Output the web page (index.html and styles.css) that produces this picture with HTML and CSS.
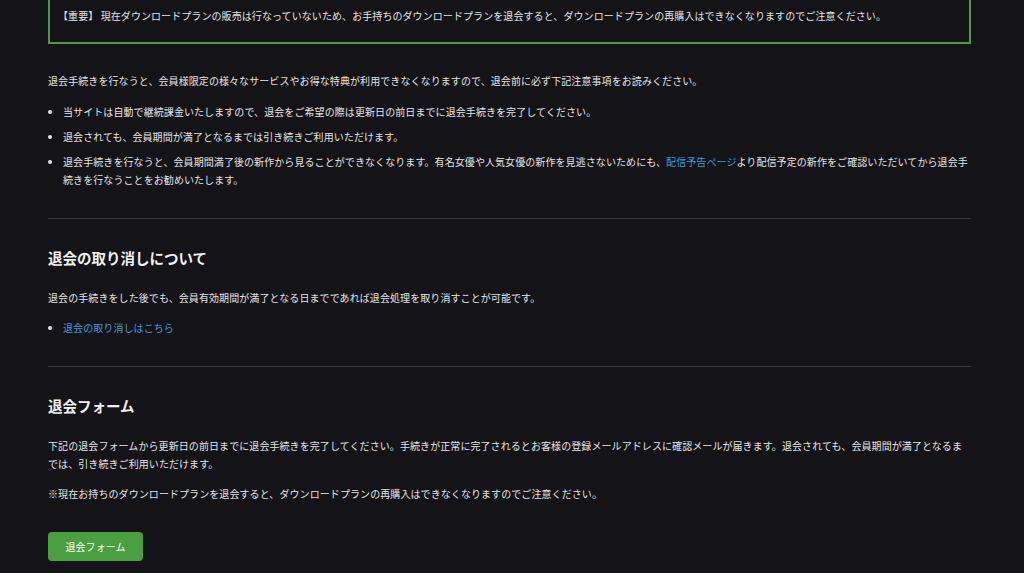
FILE: index.html
```html
<!DOCTYPE html>
<html lang="ja">
<head>
  <meta charset="UTF-8">
  <title>退会手続き</title>
  <link rel="stylesheet" href="styles.css">
</head>
<body>

<div class="container">
  <div class="notice">
    【重要】 現在ダウンロードプランの販売は行なっていないため、お手持ちのダウンロードプランを退会すると、ダウンロードプランの再購入はできなくなりますのでご注意ください。
  </div>

  <div class="section first">
    <p class="lead">退会手続きを行なうと、会員様限定の様々なサービスやお得な特典が利用できなくなりますので、退会前に必ず下記注意事項をお読みください。</p>
    <ul class="list">
      <li>当サイトは自動で継続課金いたしますので、退会をご希望の際は更新日の前日までに退会手続きを完了してください。</li>
      <li>退会されても、会員期間が満了となるまでは引き続きご利用いただけます。</li>
      <li>退会手続きを行なうと、会員期間満了後の新作から見ることができなくなります。有名女優や人気女優の新作を見逃さないためにも、<a href="#">配信予告ページ</a>より配信予定の新作をご確認いただいてから退会手続きを行なうことをお勧めいたします。</li>
    </ul>
  </div>

  <hr>

  <div class="section">
    <h2>退会の取り消しについて</h2>
    <p>退会の手続きをした後でも、会員有効期間が満了となる日までであれば退会処理を取り消すことが可能です。</p>
    <ul class="list">
      <li><a href="#">退会の取り消しはこちら</a></li>
    </ul>
  </div>

  <hr>

  <div class="section">
    <h2>退会フォーム</h2>
    <p>下記の退会フォームから更新日の前日までに退会手続きを完了してください。手続きが正常に完了されるとお客様の登録メールアドレスに確認メールが届きます。退会されても、会員期間が満了となるまでは、引き続きご利用いただけます。</p>
    <p class="note">※現在お持ちのダウンロードプランを退会すると、ダウンロードプランの再購入はできなくなりますのでご注意ください。</p>
    <button class="submit">退会フォーム</button>
  </div>
</div>

</body>
</html>
```

FILE: styles.css
```css
body {
  margin: 0;
  padding: 0;
  background: #141318;
  color: #e4e4e6;
  font-family: "Noto Sans CJK JP", "Noto Sans", sans-serif;
  font-size: 10px;
  line-height: 18px;
  letter-spacing: 0.08px;
}
.container {
  width: 923px;
  margin-left: 48px;
}
.notice {
  margin-top: -13px;
  padding: 18px 8px 17px 8px;
  border: 2px solid #4c9c45;
}
.section.first {
  margin-top: 28px;
}
p {
  margin: 0;
}
.lead {
  margin-bottom: 13px;
}
.list {
  margin: 12px 0 0;
  padding: 0 0 0 15px;
}
.list li {
  margin-bottom: 7px;
}
.list li:last-child {
  margin-bottom: 0;
}
.section > .lead + .list {
  margin-top: 0;
}
a {
  color: #3f9ad8;
  text-decoration: none;
}
hr {
  border: none;
  border-top: 1px solid #38373c;
  margin: 29px 0 29px;
}
h2 {
  font-size: 14.5px;
  font-weight: bold;
  line-height: 20px;
  margin: 0 0 21px;
  color: #f0f0f2;
  letter-spacing: 0;
}
.note {
  margin-top: 12px;
}
.submit {
  margin-top: 29px;
  width: 95px;
  height: 29px;
  background: #4a9f41;
  color: #ffffff;
  border: none;
  border-radius: 4px;
  font-family: "Noto Sans CJK JP", sans-serif;
  font-size: 10px;
  letter-spacing: 0.08px;
  padding: 0;
}
```
